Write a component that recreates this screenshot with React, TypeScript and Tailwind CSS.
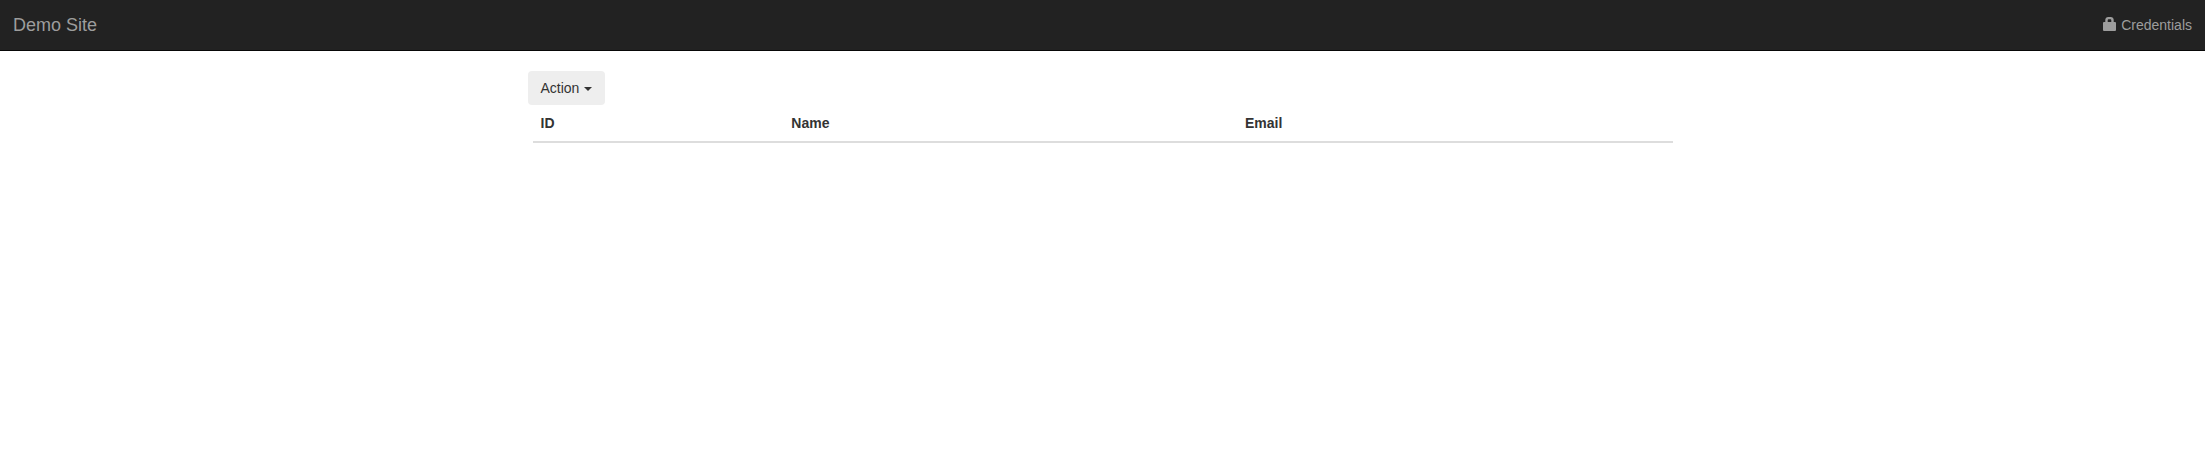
function LockIcon() {
  return (
    <svg viewBox="0 0 13 14" className="-mt-0.5 h-3.5 w-[13px]" fill="currentColor" aria-hidden="true">
      <path
        fillRule="evenodd"
        d="M2.300 5V2.800C2.300 1.200 3.600 0 5.200 0h2.600c1.600 0 2.900 1.200 2.900 2.800V5H12a1 1 0 0 1 1 1v7a1 1 0 0 1-1 1H1a1 1 0 0 1-1-1V6a1 1 0 0 1 1-1h1.300Zm2.400 0h3.600V3.300C8.300 2.600 7.900 2.200 7.300 2.200H5.700C5.100 2.200 4.700 2.600 4.700 3.300V5Z"
      />
    </svg>
  );
}

const columns = [
  { label: "ID", width: "w-[22%]" },
  { label: "Name", width: "w-[39.8%]" },
  { label: "Email", width: "w-auto" },
];

export default function App() {
  return (
    <div className="font-['Liberation_Sans',Arial,sans-serif] text-sm/5 text-[#333333]">
      <nav className="flex items-center justify-between border-b border-[#080808] bg-[#222222] px-[13px] text-[#9d9d9d]">
        <a href="#" className="py-[15px] text-lg/5 hover:text-white">
          Demo Site
        </a>
        <a href="#credentials" className="flex items-center gap-[5px] py-[15px] hover:text-white">
          <LockIcon />
          Credentials
        </a>
      </nav>
      <main className="mx-auto mt-5 max-w-[1170px] px-[15px]">
        <button
          type="button"
          aria-haspopup="menu"
          className="-ml-[5px] flex items-center gap-[5px] rounded-sm bg-[#eeeeee] px-[13px] py-[7px]"
        >
          Action
          <svg viewBox="0 0 8 4" className="mt-0.5 h-1 w-2" fill="currentColor" aria-hidden="true">
            <path d="M0 0h8L4 4Z" />
          </svg>
        </button>
        <table className="w-full table-fixed border-separate border-spacing-0">
          <thead>
            <tr>
              {columns.map((column) => (
                <th
                  key={column.label}
                  scope="col"
                  className={`${column.width} border-b-2 border-[#dddddd] p-2 text-left font-bold`}
                >
                  {column.label}
                </th>
              ))}
            </tr>
          </thead>
        </table>
      </main>
    </div>
  );
}
